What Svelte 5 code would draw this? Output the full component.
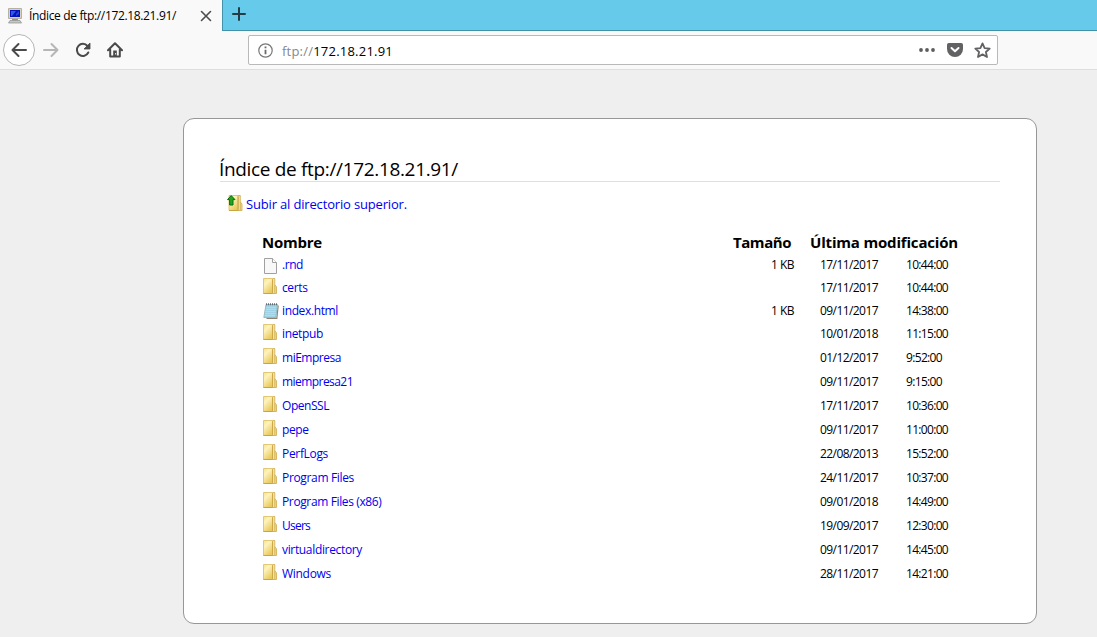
<script>
  const rows = [
    { name: '.rnd', kind: 'file', size: '1 KB', date: '17/11/2017', time: '10:44:00', w: 21 },
    { name: 'certs', kind: 'folder', size: '', date: '17/11/2017', time: '10:44:00', w: 25.5 },
    { name: 'index.html', kind: 'note', size: '1 KB', date: '09/11/2017', time: '14:38:00', w: 56 },
    { name: 'inetpub', kind: 'folder', size: '', date: '10/01/2018', time: '11:15:00', w: 41 },
    { name: 'miEmpresa', kind: 'folder', size: '', date: '01/12/2017', time: '9:52:00', w: 59 },
    { name: 'miempresa21', kind: 'folder', size: '', date: '09/11/2017', time: '9:15:00', w: 71 },
    { name: 'OpenSSL', kind: 'folder', size: '', date: '17/11/2017', time: '10:36:00', w: 47 },
    { name: 'pepe', kind: 'folder', size: '', date: '09/11/2017', time: '11:00:00', w: 26.5 },
    { name: 'PerfLogs', kind: 'folder', size: '', date: '22/08/2013', time: '15:52:00', w: 46 },
    { name: 'Program Files', kind: 'folder', size: '', date: '24/11/2017', time: '10:37:00', w: 72 },
    { name: 'Program Files (x86)', kind: 'folder', size: '', date: '09/01/2018', time: '14:49:00', w: 99.5 },
    { name: 'Users', kind: 'folder', size: '', date: '19/09/2017', time: '12:30:00', w: 28 },
    { name: 'virtualdirectory', kind: 'folder', size: '', date: '09/11/2017', time: '14:45:00', w: 80 },
    { name: 'Windows', kind: 'folder', size: '', date: '28/11/2017', time: '14:21:00', w: 49 }
  ];

  // Spreads the letters of a label so that it fills the given width.
  function fit(node, width) {
    const natural = node.getBoundingClientRect().width;
    const count = node.textContent.length;
    node.style.letterSpacing = (width - natural) / count + 'px';
  }
</script>

{#snippet folder()}
  <path d="M10.500 15.500V8.500l1.500-1.500 1.500 2v6.500z" fill="#f0d98a" stroke="#d2b25a" stroke-width=".9" />
  <path d="M9.500.5h2.300v15H9.500z" fill="#f6e39a" stroke="#d2b25a" stroke-width=".9" />
  <path d="M.5.500h9v15h-9z" fill="url(#folderFace)" stroke="#dfc26a" stroke-width=".9" />
  <path d="M9.500 1.500v14" stroke="#c9a544" stroke-width=".9" />
  <path d="M.5 15.500h9" stroke="#c5a13e" stroke-width=".9" />
{/snippet}

<div class="browser">
  <div class="tabs">
    <div class="tab">
      <svg class="favicon" width="16" height="16" viewBox="0 0 16 16">
        <path d="M1.500.5h13v10h-13z" fill="#d7d3bd" stroke="#b5b2a2" />
        <path d="M3 2h10v7H3z" fill="#0713b9" />
        <path d="M4 3h5L5 8H4z" fill="#3158ea" />
        <path d="M9 6l3-3v3L9 8z" fill="#2446d8" />
        <path d="M5 11h6v1.500H5z" fill="#96968c" />
        <path d="M3 12.500h10l1.500 2.500h-13z" fill="#c9c8bd" stroke="#888c90" stroke-width=".7" />
      </svg>
      <span class="tabtitle" use:fit={147}>Índice de ftp://172.18.21.91/</span>
      <svg class="close" width="12" height="12" viewBox="0 0 12 12"><path d="M1.500 1.500l9 9m0-9l-9 9" stroke="#4c4c4d" stroke-width="1.600" stroke-linecap="round" /></svg>
    </div>
    <div class="newtab">
      <svg width="14" height="14" viewBox="0 0 14 14"><path d="M7 1v12M1 7h12" stroke="#243c46" stroke-width="2" stroke-linecap="round" /></svg>
    </div>
  </div>
  <div class="toolbar">
    <div class="back">
      <svg width="16" height="16" viewBox="0 0 16 16"><path d="M15 8H2M7.500 2L1.500 8l6 6" fill="none" stroke="#4a4a4b" stroke-width="2" stroke-linecap="round" stroke-linejoin="round" /></svg>
    </div>
    <svg class="forward" width="16" height="16" viewBox="0 0 16 16"><path d="M1 8h13M8.500 2l6 6-6 6" fill="none" stroke="#b6b6b7" stroke-width="2" stroke-linecap="round" stroke-linejoin="round" /></svg>
    <svg class="reload" width="16" height="16" viewBox="0 0 16 16">
      <path d="M13.300 10.500A6 6 0 1 1 12.500 4" fill="none" stroke="#4a4a4b" stroke-width="2" stroke-linecap="round" />
      <path d="M15 1v6H9z" fill="#4a4a4b" stroke="#4a4a4b" stroke-width=".8" stroke-linejoin="round" />
    </svg>
    <svg class="home" width="16" height="16" viewBox="0 0 16 16">
      <path d="M1 8.200L8 1.200l7 7M3.200 7.500V14.500h9.600V7.500" fill="none" stroke="#4a4a4b" stroke-width="2" stroke-linecap="round" stroke-linejoin="round" />
      <path d="M6.200 14.500V8.500h3.600v6z" fill="#4a4a4b" /><path d="M8 11h1v1.500H8z" fill="#ddd" />
    </svg>
    <div class="address">
      <svg class="info" width="15" height="15" viewBox="0 0 15 15">
        <circle cx="7.500" cy="7.500" r="6.700" fill="none" stroke="#77777a" stroke-width="1.200" />
        <path d="M7.500 6.700v4.600M7.500 3.600v1.700" stroke="#6a6a6d" stroke-width="1.800" />
      </svg>
      <span class="url" use:fit={111}><span class="scheme">ftp://</span>172.18.21.91</span>
      <svg class="dots" width="16" height="16" viewBox="0 0 16 16" fill="#5d5d5f"><circle cx="2" cy="8" r="1.900" /><circle cx="8" cy="8" r="1.900" /><circle cx="14" cy="8" r="1.900" /></svg>
      <svg class="pocket" width="16" height="16" viewBox="0 0 16 16">
        <path d="M1.800 1h12.400Q16 1 16 2.800V7a8 8 0 0 1-16 0V2.800Q0 1 1.800 1z" fill="#626264" />
        <path d="M4.500 6L8 9.300 11.500 6" fill="none" stroke="#fff" stroke-width="2" stroke-linecap="round" stroke-linejoin="round" />
      </svg>
      <svg class="star" width="17" height="17" viewBox="0 0 17 17"><path d="M8.500 1.400l2.100 4.700 5.100.5-3.800 3.400 1.100 5-4.500-2.600L4 15l1.100-5-3.800-3.400 5.100-.5z" fill="none" stroke="#626264" stroke-width="1.800" stroke-linejoin="round" /></svg>
    </div>
  </div>

  <main>
    <section>
      <h1><span use:fit={239}>Índice de ftp://172.18.21.91/</span></h1>
      <div class="up">
        <svg width="16" height="16" viewBox="0 0 16 16">
          <defs>
            <linearGradient id="folderFace" x1="0" y1="0" x2=".6" y2="1"><stop offset="0" stop-color="#f6e08a" /><stop offset=".35" stop-color="#fdf3bd" /><stop offset="1" stop-color="#e9ca5c" /></linearGradient>
          </defs>
          <g transform="translate(1.500 0)">{@render folder()}</g>
          <path d="M4.200.6l3.800 4H6v5.400H2.600V4.600H.5z" fill="#25a41e" stroke="#087010" stroke-width="1" />
        </svg>
        <span class="link" use:fit={161}>Subir al directorio superior.</span>
      </div>
      <div class="row head">
        <span class="name"><span use:fit={60}>Nombre</span></span>
        <span class="size"><span use:fit={58}>Tamaño</span></span>
        <span class="mod"><span use:fit={148}>Última modificación</span></span>
      </div>
      {#each rows as row, i}
        <div class="row" class:tall={i > 2}>
          <span class="name">
            <svg class={row.kind} width="16" height="16" viewBox="0 0 16 16">
              {#if row.kind === 'folder'}
                {@render folder()}
              {:else if row.kind === 'file'}
                <path d="M1.500.5h8l4 4v11h-12z" fill="#f8f8f8" stroke="#a0a0a0" />
                <path d="M9.500.5v4h4" fill="#fff" stroke="#a0a0a0" />
              {:else}
                <path d="M3.500 15.500h10.300l1.400-13" fill="none" stroke="#8d8272" stroke-width="1.200" />
                <path d="M3 1.500h11.500l-1.700 13H.8z" fill="#9fd2e4" stroke="#86aebc" stroke-width=".8" />
                <path d="M3 4.500h10.500M2.600 6.500h10.600M2.300 8.500H13M2 10.500h10.700M1.600 12.500h10.900" stroke="#b4dfec" stroke-width=".8" />
                <path d="M3 1.300h11.500" stroke="#5d6f76" stroke-width="2" stroke-dasharray="1 1" />
              {/if}
            </svg>
            <span class="link" use:fit={row.w}>{row.name}</span>
          </span>
          <span class="size">{#if row.size}<span use:fit={23}>{row.size}</span>{/if}</span>
          <span class="date"><span use:fit={58}>{row.date}</span></span>
          <span class="time"><span use:fit={row.time.length === 8 ? 42 : 36}>{row.time}</span></span>
        </div>
      {/each}
    </section>
  </main>
</div>

<style>
  :global(body) { margin: 0; background: #efefef; }
  .browser { width: 1097px; height: 637px; overflow: hidden; font-family: "Open Sans", "Noto Sans", sans-serif; color: #000; background: #efefef; display: flex; flex-direction: column; white-space: nowrap; }
  svg { flex: none; display: block; }
  .tabs { height: 31px; display: flex; background: #66caea; box-sizing: border-box; border-bottom: 1px solid #4491aa; flex: none; }
  .tab { width: 223px; height: 31px; background: #f9f9fa; display: flex; align-items: center; box-sizing: border-box; padding-left: 7px; border-right: 1px solid #4491aa; }
  .tabtitle { font-size: 12px; line-height: 30px; margin-left: 6px; }
  .close { margin-left: 24px; }
  .newtab { padding: 7px 0 0 9px; }
  .toolbar { height: 39px; background: #f9f9fa; border-bottom: 1px solid #dededf; box-sizing: border-box; display: flex; align-items: center; flex: none; padding-left: 3px; }
  .back { width: 32px; height: 32px; box-sizing: border-box; border: 1px solid #b5b5b6; border-radius: 50%; background: #fff; display: grid; place-items: center; }
  .forward { margin-left: 8px; }
  .reload, .home { margin-left: 16px; }
  .address { margin-left: 125px; width: 750px; height: 30px; box-sizing: border-box; border: 1px solid #b9b9ba; border-radius: 2px; background: #fff; display: flex; align-items: center; padding-left: 9px; }
  .url { font-size: 13px; margin-left: 9px; line-height: 28px; padding-top: 1px; }
  .scheme { color: #87878a; }
  .dots { margin-left: 526px; }
  .pocket { margin-left: 12px; }
  .star { margin-left: 11px; }
  main { padding: 48px 0 0 183px; }
  section { width: 854px; height: 506px; box-sizing: border-box; border: 1px solid #979797; border-radius: 11px; background: #fff; padding: 36px 36px 0; }
  h1 { margin: 0; font-size: 19px; font-weight: 400; line-height: 28px; height: 26px; border-bottom: 1px solid #dedede; }
  h1 span { margin-left: -1px; }
  .up { display: flex; height: 22px; margin: 12px 0 15px 7px; }
  .up svg { margin-top: 1px; }
  .up .link { font-size: 13px; line-height: 21px; margin-left: 3px; }
  .link { color: #0000ee; }
  .row { display: flex; height: 23px; line-height: 24px; font-size: 12px; padding-left: 43px; }
  .tall { height: 24px; }
  .head { height: 22px; line-height: 23px; font-size: 15px; font-weight: 700; padding-left: 42px; }
  .name { width: 431px; display: flex; flex: none; }
  .head .name { width: 432px; }
  .folder { margin-top: 2px; }
  .file { margin-top: 5px; }
  .note { margin-top: 4px; }
  .name .link { margin-left: 3px; }
  .size { width: 100px; text-align: right; flex: none; }
  .head .size { width: 97px; }
  .date { width: 112px; padding-left: 26px; box-sizing: border-box; flex: none; }
  .head .mod { padding-left: 19px; }
</style>
